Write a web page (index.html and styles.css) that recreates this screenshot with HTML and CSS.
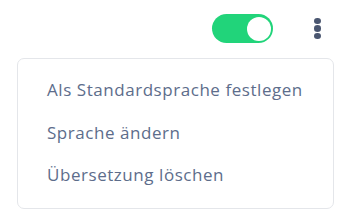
FILE: index.html
```html
<!doctype html>
<html lang="de">
<head>
  <meta charset="UTF-8">
  <title>Sprachen</title>
  <link rel="stylesheet" href="styles.css">
</head>
<body>
  <div class="panel">
    <div class="toolbar">
      <div class="toggle on">
        <div class="knob"></div>
      </div>
      <div class="kebab">
        <span></span>
        <span></span>
        <span></span>
      </div>
    </div>
    <div class="menu">
      <div class="menu-item">Als Standardsprache festlegen</div>
      <div class="menu-item">Sprache ändern</div>
      <div class="menu-item">Übersetzung löschen</div>
    </div>
  </div>
</body>
</html>
```

FILE: styles.css
```css
body {
    margin: 0;
    background: #fff;
    font-family: "Open Sans", "Noto Sans", sans-serif;
}

.panel {
    width: 350px;
    height: 224px;
}

.toolbar {
    display: flex;
    justify-content: flex-end;
    align-items: center;
    height: 29px;
    padding: 14px 0 0;
}

.toggle {
    width: 61px;
    height: 29px;
    border-radius: 15px;
    background: #21d47a;
    display: flex;
    align-items: center;
    justify-content: flex-end;
    padding: 0 2px;
    box-sizing: border-box;
}

.knob {
    width: 24px;
    height: 24px;
    border-radius: 50%;
    background: #fff;
}

.kebab {
    display: flex;
    flex-direction: column;
    gap: 1px;
    margin: 0 29px 0 41px;
}

.kebab span {
    width: 7px;
    height: 6.5px;
    border-radius: 50%;
    background: #4a5670;
}

.menu {
    margin: 15px 16px 0 17px;
    border: 1px solid #e4e6ea;
    border-radius: 7px;
    padding: 10px 0 11px;
}

.menu-item {
    color: #5d6d8b;
    font-size: 17px;
    letter-spacing: 0.55px;
    padding: 0 0 0 29px;
    height: 42.5px;
    line-height: 42.5px;
}
```
